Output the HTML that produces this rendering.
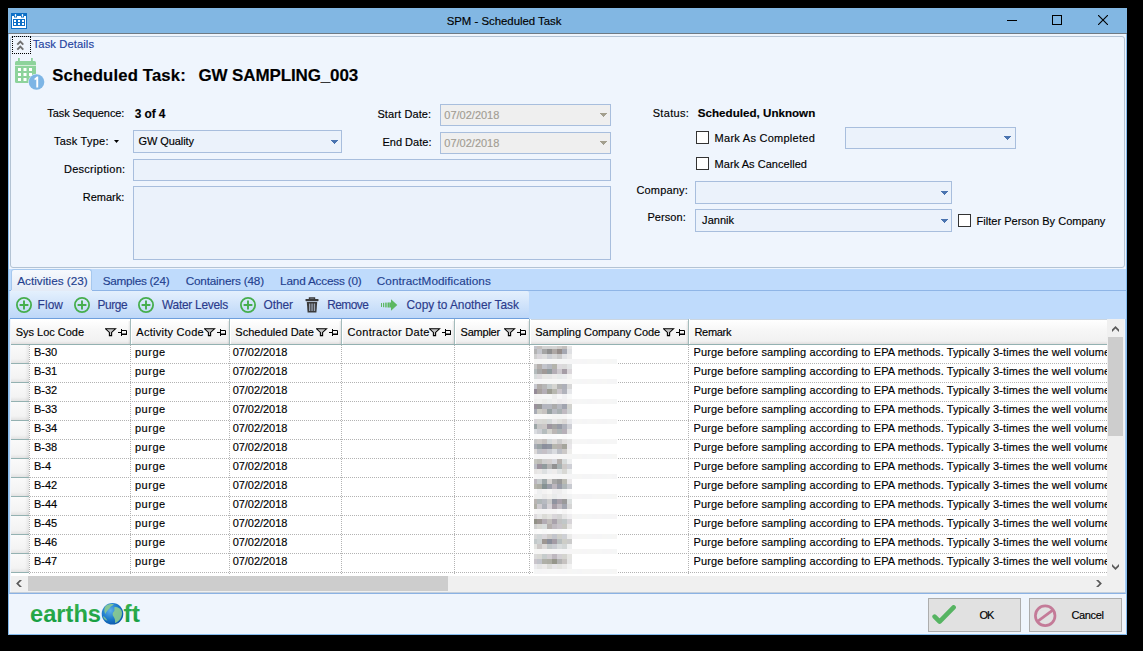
<!DOCTYPE html>
<html><head><meta charset="utf-8">
<style>
*{box-sizing:border-box}
html,body{margin:0;padding:0;width:1143px;height:651px;overflow:hidden;background:#000;font-family:"Liberation Sans",sans-serif;font-size:11px;color:#000}
.a{position:absolute}
.t{position:absolute;line-height:1;white-space:nowrap;-webkit-text-stroke:0.15px currentColor}
</style></head><body>
<div class="a" style="left:8px;top:8px;width:1119px;height:627px;background:#EFF5FD;border:1px solid #86BCEE"></div>
<div class="a" style="left:8px;top:8px;width:1119px;height:25px;background:#82B7E3"></div>
<div class="a" style="left:8px;top:33px;width:1119px;height:1px;background:#6F7A84"></div>
<svg class="a" style="left:11px;top:13px" width="16" height="16" viewBox="0 0 16 16">
<rect x="0" y="0" width="16" height="16" fill="#0D6FC6"/>
<rect x="1" y="3" width="14" height="12" fill="#fff"/>
<rect x="3" y="2" width="3" height="2.5" fill="#0D6FC6"/><rect x="10" y="2" width="3" height="2.5" fill="#0D6FC6"/>
<rect x="3.8" y="1" width="1.4" height="2.8" rx="0.7" fill="#fff"/><rect x="10.8" y="1" width="1.4" height="2.8" rx="0.7" fill="#fff"/>
<rect x="2" y="6" width="12" height="7" fill="#0D6FC6"/>
<rect x="3" y="7" width="2" height="2" fill="#fff"/><rect x="7" y="7" width="2" height="2" fill="#fff"/><rect x="11" y="7" width="2" height="2" fill="#fff"/>
<rect x="3" y="10" width="2" height="2" fill="#fff"/><rect x="7" y="10" width="2" height="2" fill="#fff"/><rect x="11" y="10" width="2" height="2" fill="#fff"/>
</svg>
<div id="title" class="t" style="left:446.70px;top:16.01px;font-size:11.4px;font-weight:400;color:#000;letter-spacing:-0.011px;">SPM - Scheduled Task</div>
<div class="a" style="left:1007px;top:20px;width:10px;height:1px;background:#000"></div>
<div class="a" style="left:1052px;top:15px;width:10px;height:10px;border:1px solid #000"></div>
<svg class="a" style="left:1098px;top:15px" width="10" height="10" viewBox="0 0 10 10"><path d="M0 0L10 10M10 0L0 10" stroke="#000" stroke-width="1.1"/></svg>
<div class="a" style="left:10px;top:36px;width:1115px;height:232px;border:1px solid #B3C3D4;border-radius:3px;background:#EFF5FD"></div>
<div class="a" style="left:12px;top:36px;width:19px;height:18px;border:1px dotted #000"></div>
<svg class="a" style="left:16px;top:40px" width="10" height="11" viewBox="0 0 10 11"><path d="M1.3 4.6L4.3 1.6L7.3 4.6M1.3 9.6L4.3 6.6L7.3 9.6" stroke="#6F6F6F" stroke-width="1.9" fill="none"/></svg>
<div id="td" class="t" style="left:32.70px;top:39.00px;font-size:11.2px;font-weight:400;color:#2443A0;letter-spacing:0.091px;">Task Details</div>
<svg class="a" style="left:14px;top:57px" width="32" height="34" viewBox="0 0 32 34">
<rect x="1" y="4" width="21" height="22" rx="1.5" fill="#8DD39B"/>
<rect x="4" y="1" width="1.8" height="5" fill="#8DD39B"/><rect x="17" y="1" width="1.8" height="5" fill="#8DD39B"/>
<rect x="1" y="8" width="21" height="0.8" fill="#E6F4E8"/>
<rect x="4" y="11" width="3" height="3" fill="#fff"/><rect x="9.5" y="11" width="3" height="3" fill="#fff"/><rect x="15" y="11" width="3" height="3" fill="#fff"/>
<rect x="4" y="16" width="3" height="3" fill="#fff"/><rect x="9.5" y="16" width="3" height="3" fill="#fff"/><rect x="15" y="16" width="3" height="3" fill="#fff"/>
<rect x="4" y="21" width="3" height="3" fill="#fff"/><rect x="9.5" y="21" width="3" height="3" fill="#fff"/>
<circle cx="22.5" cy="25" r="8.3" fill="#EFF5FD"/>
<circle cx="22.5" cy="25" r="7.8" fill="#7DB5E5"/>
<path d="M20.3 21.8L23 19.6H24.2V30.4H22.3V22.3L20.9 23.3Z" fill="#fff"/>
</svg>
<div id="h1" class="t" style="left:52.20px;top:68.00px;font-size:16.7px;font-weight:700;color:#000;letter-spacing:0.157px;">Scheduled Task:</div>
<div id="h2" class="t" style="left:198.50px;top:67.00px;font-size:17px;font-weight:700;color:#000;letter-spacing:-0.129px;">GW SAMPLING_003</div>
<div id="seq" class="t" style="left:47.30px;top:108.00px;font-size:11px;font-weight:400;color:#000;letter-spacing:-0.092px;">Task Sequence:</div>
<div id="seqv" class="t" style="left:134.70px;top:109.00px;font-size:11.9px;font-weight:700;color:#000;letter-spacing:-0.080px;">3 of 4</div>
<div id="ttype" class="t" style="left:53.90px;top:136.00px;font-size:11px;font-weight:400;color:#000;letter-spacing:0.244px;">Task Type:</div>
<svg class="a" style="left:114px;top:140px" width="5" height="3"><path d="M0 0H5L2.5 3Z" fill="#000"/></svg>
<div class="a" style="left:133px;top:130px;width:209px;height:23px;border:1px solid #A8BEDD;background:#EBF2FB"></div>
<div id="gwq" class="t" style="left:138.60px;top:136.00px;font-size:11px;font-weight:400;color:#000;letter-spacing:-0.089px;">GW Quality</div>
<svg class="a" style="left:331px;top:140px" width="7" height="4"><rect x="0" y="0" width="7" height="1" fill="#4A74B0"/><rect x="1" y="1" width="5" height="1" fill="#4A74B0"/><rect x="2" y="2" width="3" height="1" fill="#4A74B0"/><rect x="3" y="3" width="1" height="1" fill="#4A74B0"/></svg>
<div id="desc" class="t" style="left:63.90px;top:164.00px;font-size:11px;font-weight:400;color:#000;letter-spacing:0.291px;">Description:</div>
<div class="a" style="left:133px;top:159px;width:478px;height:22px;border:1px solid #A8BEDD;background:#EBF2FB"></div>
<div id="rem" class="t" style="left:82.70px;top:192.00px;font-size:11px;font-weight:400;color:#000;letter-spacing:0.000px;">Remark:</div>
<div class="a" style="left:133px;top:186px;width:478px;height:74px;border:1px solid #A8BEDD;background:#EBF2FB"></div>
<div id="sd" class="t" style="left:377.40px;top:109.00px;font-size:11px;font-weight:400;color:#000;letter-spacing:0.120px;">Start Date:</div>
<div class="a" style="left:440px;top:104px;width:171px;height:22px;border:1px solid #A8BEDD;background:#EFEFEF"></div>
<div id="sdv" class="t" style="left:444.30px;top:110.00px;font-size:11px;font-weight:400;color:#A29D93;letter-spacing:0.000px;">07/02/2018</div>
<svg class="a" style="left:600px;top:113px" width="7" height="4"><rect x="0" y="0" width="7" height="1" fill="#A39F8E"/><rect x="1" y="1" width="5" height="1" fill="#A39F8E"/><rect x="2" y="2" width="3" height="1" fill="#A39F8E"/><rect x="3" y="3" width="1" height="1" fill="#A39F8E"/></svg>
<div id="ed" class="t" style="left:382.40px;top:137.00px;font-size:11px;font-weight:400;color:#000;letter-spacing:0.025px;">End Date:</div>
<div class="a" style="left:440px;top:132px;width:171px;height:22px;border:1px solid #A8BEDD;background:#EFEFEF"></div>
<div id="edv" class="t" style="left:444.30px;top:138.00px;font-size:11px;font-weight:400;color:#A29D93;letter-spacing:0.000px;">07/02/2018</div>
<svg class="a" style="left:600px;top:141px" width="7" height="4"><rect x="0" y="0" width="7" height="1" fill="#A39F8E"/><rect x="1" y="1" width="5" height="1" fill="#A39F8E"/><rect x="2" y="2" width="3" height="1" fill="#A39F8E"/><rect x="3" y="3" width="1" height="1" fill="#A39F8E"/></svg>
<div id="st" class="t" style="left:652.70px;top:108.00px;font-size:11px;font-weight:400;color:#000;letter-spacing:0.333px;">Status:</div>
<div id="stv" class="t" style="left:697.80px;top:107.01px;font-size:11.6px;font-weight:700;color:#000;letter-spacing:0.012px;">Scheduled, Unknown</div>
<div class="a" style="left:696px;top:131px;width:13px;height:13px;border:1px solid #333;background:#fff"></div>
<div id="mac" class="t" style="left:714.60px;top:133.00px;font-size:11px;font-weight:400;color:#000;letter-spacing:0.262px;">Mark As Completed</div>
<div class="a" style="left:845px;top:127px;width:171px;height:22px;border:1px solid #A8BEDD;background:#EBF2FB"></div>
<svg class="a" style="left:1004px;top:136px" width="7" height="4"><rect x="0" y="0" width="7" height="1" fill="#4A74B0"/><rect x="1" y="1" width="5" height="1" fill="#4A74B0"/><rect x="2" y="2" width="3" height="1" fill="#4A74B0"/><rect x="3" y="3" width="1" height="1" fill="#4A74B0"/></svg>
<div class="a" style="left:696px;top:157px;width:13px;height:13px;border:1px solid #333;background:#fff"></div>
<div id="macc" class="t" style="left:714.60px;top:159.00px;font-size:11px;font-weight:400;color:#000;letter-spacing:0.038px;">Mark As Cancelled</div>
<div id="comp" class="t" style="left:636.40px;top:185.00px;font-size:11px;font-weight:400;color:#000;letter-spacing:0.171px;">Company:</div>
<div class="a" style="left:695px;top:181px;width:257px;height:23px;border:1px solid #A8BEDD;background:#EBF2FB"></div>
<svg class="a" style="left:941px;top:191px" width="7" height="4"><rect x="0" y="0" width="7" height="1" fill="#4A74B0"/><rect x="1" y="1" width="5" height="1" fill="#4A74B0"/><rect x="2" y="2" width="3" height="1" fill="#4A74B0"/><rect x="3" y="3" width="1" height="1" fill="#4A74B0"/></svg>
<div id="pers" class="t" style="left:647.40px;top:212.00px;font-size:11px;font-weight:400;color:#000;letter-spacing:0.067px;">Person:</div>
<div class="a" style="left:695px;top:209px;width:257px;height:23px;border:1px solid #A8BEDD;background:#EBF2FB"></div>
<div id="jan" class="t" style="left:702.10px;top:215.00px;font-size:11px;font-weight:400;color:#000;letter-spacing:0.040px;">Jannik</div>
<svg class="a" style="left:941px;top:219px" width="7" height="4"><rect x="0" y="0" width="7" height="1" fill="#4A74B0"/><rect x="1" y="1" width="5" height="1" fill="#4A74B0"/><rect x="2" y="2" width="3" height="1" fill="#4A74B0"/><rect x="3" y="3" width="1" height="1" fill="#4A74B0"/></svg>
<div class="a" style="left:958px;top:214px;width:13px;height:13px;border:1px solid #333;background:#fff"></div>
<div id="fpc" class="t" style="left:976.60px;top:216.00px;font-size:11px;font-weight:400;color:#000;letter-spacing:0.017px;">Filter Person By Company</div>
<div class="a" style="left:9px;top:269px;width:1117px;height:50px;background:#BFDBFC"></div>
<div class="a" style="left:9px;top:291px;width:1117px;height:303px;background:#EFF5FD;border:1px solid #A9CAEE;border-top:none;border-bottom-color:#8BB2E4"></div>
<div class="a" style="left:9px;top:291px;width:1117px;height:28px;background:#BFDBFC"></div>
<div class="a" style="left:11px;top:269px;width:81px;height:22px;background:linear-gradient(#F6F9FD,#E4EBF6);border:1px solid #A6C8EE;border-bottom:none;border-radius:3px 3px 0 0"></div>
<div id="tab1" class="t" style="left:17.20px;top:275.01px;font-size:11.75px;font-weight:400;color:#233F8F;letter-spacing:0.000px;">Activities (23)</div>
<div id="tab2" class="t" style="left:102.70px;top:275.01px;font-size:11.75px;font-weight:400;color:#233F8F;letter-spacing:-0.273px;">Samples (24)</div>
<div id="tab3" class="t" style="left:185.70px;top:275.01px;font-size:11.75px;font-weight:400;color:#233F8F;letter-spacing:-0.186px;">Containers (48)</div>
<div id="tab4" class="t" style="left:280.10px;top:275.01px;font-size:11.75px;font-weight:400;color:#233F8F;letter-spacing:-0.186px;">Land Access (0)</div>
<div id="tab5" class="t" style="left:376.80px;top:275.01px;font-size:11.75px;font-weight:400;color:#233F8F;letter-spacing:0.050px;">ContractModifications</div>
<div class="a" style="left:9px;top:290px;width:1117px;height:1px;background:#8FB5E6"></div>
<div class="a" style="left:11px;top:290px;width:81px;height:1px;background:#E4EBF6"></div>
<div class="a" style="left:10px;top:291px;width:519px;height:28px;background:linear-gradient(#E4F0FD,#BDD7F8);border-bottom:1px solid #6E9FDC;border-radius:0 2px 0 0"></div>
<svg class="a" style="left:16px;top:297px" width="16" height="16" viewBox="0 0 16 16"><circle cx="8" cy="8" r="7.1" fill="none" stroke="#46AE4D" stroke-width="1.8"/><path d="M3.6 8H12.4M8 3.6V12.4" stroke="#46AE4D" stroke-width="1.9"/></svg>
<svg class="a" style="left:74px;top:297px" width="16" height="16" viewBox="0 0 16 16"><circle cx="8" cy="8" r="7.1" fill="none" stroke="#46AE4D" stroke-width="1.8"/><path d="M3.6 8H12.4M8 3.6V12.4" stroke="#46AE4D" stroke-width="1.9"/></svg>
<svg class="a" style="left:138px;top:297px" width="16" height="16" viewBox="0 0 16 16"><circle cx="8" cy="8" r="7.1" fill="none" stroke="#46AE4D" stroke-width="1.8"/><path d="M3.6 8H12.4M8 3.6V12.4" stroke="#46AE4D" stroke-width="1.9"/></svg>
<svg class="a" style="left:240px;top:297px" width="16" height="16" viewBox="0 0 16 16"><circle cx="8" cy="8" r="7.1" fill="none" stroke="#46AE4D" stroke-width="1.8"/><path d="M3.6 8H12.4M8 3.6V12.4" stroke="#46AE4D" stroke-width="1.9"/></svg>
<svg class="a" style="left:305px;top:297px" width="14" height="16" viewBox="0 0 14 16"><path d="M4.5 2.2V1H9.5V2.2" stroke="#3A3A3A" stroke-width="1.4" fill="none"/><rect x="0.5" y="2" width="13" height="2.2" rx="0.6" fill="#3A3A3A"/><path d="M1.8 5H12.2L11.4 15.5H2.6Z" fill="#3A3A3A"/><rect x="4" y="6.5" width="1.3" height="7.5" fill="#9AA5B5"/><rect x="6.4" y="6.5" width="1.3" height="7.5" fill="#9AA5B5"/><rect x="8.8" y="6.5" width="1.3" height="7.5" fill="#9AA5B5"/></svg>
<svg class="a" style="left:381px;top:299px" width="17" height="12" viewBox="0 0 17 12"><rect x="0" y="4" width="1" height="4" fill="#5DB862"/><rect x="2" y="3.8" width="1.2" height="4.4" fill="#5DB862"/><rect x="4.2" y="3.6" width="1.5" height="4.8" fill="#5DB862"/><rect x="6.5" y="3.5" width="2" height="5" fill="#5DB862"/><path d="M8.5 3.5H10V0.3L16.3 6L10 11.7V8.5H8.5Z" fill="#5DB862"/></svg>
<div id="tb1" class="t" style="left:37.60px;top:300.00px;font-size:11.9px;font-weight:400;color:#2B3B8C;letter-spacing:0.067px;">Flow</div>
<div id="tb2" class="t" style="left:97.40px;top:300.00px;font-size:11.9px;font-weight:400;color:#2B3B8C;letter-spacing:-0.350px;">Purge</div>
<div id="tb3" class="t" style="left:162.00px;top:300.00px;font-size:11.9px;font-weight:400;color:#2B3B8C;letter-spacing:-0.255px;">Water Levels</div>
<div id="tb4" class="t" style="left:263.50px;top:300.00px;font-size:11.9px;font-weight:400;color:#2B3B8C;letter-spacing:-0.050px;">Other</div>
<div id="tb5" class="t" style="left:327.20px;top:300.00px;font-size:11.9px;font-weight:400;color:#2B3B8C;letter-spacing:-0.520px;">Remove</div>
<div id="tb6" class="t" style="left:406.50px;top:300.00px;font-size:11.9px;font-weight:400;color:#2B3B8C;letter-spacing:-0.021px;">Copy to Another Task</div>
<div class="a" style="left:11px;top:319px;width:1096px;height:257px;background:#fff"></div>
<div class="a" style="left:11px;top:320px;width:1096px;height:24px;background:linear-gradient(#FFFFFF,#F6F6F6 45%,#F1F1F1 88%,#E2DFDF)"></div>
<div class="a" style="left:11px;top:344px;width:1096px;height:1px;background:#93B1B1"></div>
<div class="a" style="left:529px;top:319px;width:578px;height:1px;background:#CCD6E0"></div>
<div class="a" style="left:130px;top:319px;width:1px;height:25px;background:#A3BBBB"></div>
<div class="a" style="left:131px;top:319px;width:1px;height:25px;background:#FFFFFF"></div>
<div class="a" style="left:128px;top:321px;width:2px;height:23px;background:linear-gradient(90deg,rgba(0,0,0,0),rgba(0,0,0,0.09))"></div>
<div class="a" style="left:229px;top:319px;width:1px;height:25px;background:#A3BBBB"></div>
<div class="a" style="left:230px;top:319px;width:1px;height:25px;background:#FFFFFF"></div>
<div class="a" style="left:227px;top:321px;width:2px;height:23px;background:linear-gradient(90deg,rgba(0,0,0,0),rgba(0,0,0,0.09))"></div>
<div class="a" style="left:341px;top:319px;width:1px;height:25px;background:#A3BBBB"></div>
<div class="a" style="left:342px;top:319px;width:1px;height:25px;background:#FFFFFF"></div>
<div class="a" style="left:339px;top:321px;width:2px;height:23px;background:linear-gradient(90deg,rgba(0,0,0,0),rgba(0,0,0,0.09))"></div>
<div class="a" style="left:454px;top:319px;width:1px;height:25px;background:#A3BBBB"></div>
<div class="a" style="left:455px;top:319px;width:1px;height:25px;background:#FFFFFF"></div>
<div class="a" style="left:452px;top:321px;width:2px;height:23px;background:linear-gradient(90deg,rgba(0,0,0,0),rgba(0,0,0,0.09))"></div>
<div class="a" style="left:529px;top:319px;width:1px;height:25px;background:#A3BBBB"></div>
<div class="a" style="left:530px;top:319px;width:1px;height:25px;background:#FFFFFF"></div>
<div class="a" style="left:527px;top:321px;width:2px;height:23px;background:linear-gradient(90deg,rgba(0,0,0,0),rgba(0,0,0,0.09))"></div>
<div class="a" style="left:688px;top:319px;width:1px;height:25px;background:#A3BBBB"></div>
<div class="a" style="left:689px;top:319px;width:1px;height:25px;background:#FFFFFF"></div>
<div class="a" style="left:686px;top:321px;width:2px;height:23px;background:linear-gradient(90deg,rgba(0,0,0,0),rgba(0,0,0,0.09))"></div>
<div id="hd0" class="t" style="left:15.80px;top:327.00px;font-size:11px;font-weight:400;color:#000;letter-spacing:-0.018px;">Sys Loc Code</div>
<div id="hd1" class="t" style="left:136.30px;top:327.00px;font-size:11px;font-weight:400;color:#000;letter-spacing:0.270px;">Activity Code</div>
<div id="hd2" class="t" style="left:235.30px;top:327.00px;font-size:11px;font-weight:400;color:#000;letter-spacing:0.031px;">Scheduled Date</div>
<div id="hd3" class="t" style="left:347.60px;top:327.00px;font-size:11px;font-weight:400;color:#000;letter-spacing:0.300px;">Contractor Date</div>
<div id="hd4" class="t" style="left:460.60px;top:327.00px;font-size:11px;font-weight:400;color:#000;letter-spacing:-0.233px;">Sampler</div>
<div id="hd5" class="t" style="left:535.30px;top:327.00px;font-size:11px;font-weight:400;color:#000;letter-spacing:-0.020px;">Sampling Company Code</div>
<div id="hd6" class="t" style="left:694.40px;top:327.00px;font-size:11px;font-weight:400;color:#000;letter-spacing:-0.280px;">Remark</div>
<svg class="a" style="left:105px;top:328px" width="23" height="9" viewBox="0 0 23 9"><path d="M0.5 0.8H10.5L6.6 4.4V7.6H4.4V4.4Z" fill="#C8C8C8" stroke="#000" stroke-width="1.1"/><path d="M13 4.5H16M16.5 1V8M16.5 2.5H21.5V6.5H16.5" stroke="#000" stroke-width="1" fill="none"/><rect x="16.5" y="5.5" width="5.5" height="1.5" fill="#000"/></svg>
<svg class="a" style="left:204px;top:328px" width="23" height="9" viewBox="0 0 23 9"><path d="M0.5 0.8H10.5L6.6 4.4V7.6H4.4V4.4Z" fill="#C8C8C8" stroke="#000" stroke-width="1.1"/><path d="M13 4.5H16M16.5 1V8M16.5 2.5H21.5V6.5H16.5" stroke="#000" stroke-width="1" fill="none"/><rect x="16.5" y="5.5" width="5.5" height="1.5" fill="#000"/></svg>
<svg class="a" style="left:316px;top:328px" width="23" height="9" viewBox="0 0 23 9"><path d="M0.5 0.8H10.5L6.6 4.4V7.6H4.4V4.4Z" fill="#C8C8C8" stroke="#000" stroke-width="1.1"/><path d="M13 4.5H16M16.5 1V8M16.5 2.5H21.5V6.5H16.5" stroke="#000" stroke-width="1" fill="none"/><rect x="16.5" y="5.5" width="5.5" height="1.5" fill="#000"/></svg>
<svg class="a" style="left:429px;top:328px" width="23" height="9" viewBox="0 0 23 9"><path d="M0.5 0.8H10.5L6.6 4.4V7.6H4.4V4.4Z" fill="#C8C8C8" stroke="#000" stroke-width="1.1"/><path d="M13 4.5H16M16.5 1V8M16.5 2.5H21.5V6.5H16.5" stroke="#000" stroke-width="1" fill="none"/><rect x="16.5" y="5.5" width="5.5" height="1.5" fill="#000"/></svg>
<svg class="a" style="left:504px;top:328px" width="23" height="9" viewBox="0 0 23 9"><path d="M0.5 0.8H10.5L6.6 4.4V7.6H4.4V4.4Z" fill="#C8C8C8" stroke="#000" stroke-width="1.1"/><path d="M13 4.5H16M16.5 1V8M16.5 2.5H21.5V6.5H16.5" stroke="#000" stroke-width="1" fill="none"/><rect x="16.5" y="5.5" width="5.5" height="1.5" fill="#000"/></svg>
<svg class="a" style="left:663px;top:328px" width="23" height="9" viewBox="0 0 23 9"><path d="M0.5 0.8H10.5L6.6 4.4V7.6H4.4V4.4Z" fill="#C8C8C8" stroke="#000" stroke-width="1.1"/><path d="M13 4.5H16M16.5 1V8M16.5 2.5H21.5V6.5H16.5" stroke="#000" stroke-width="1" fill="none"/><rect x="16.5" y="5.5" width="5.5" height="1.5" fill="#000"/></svg>
<div class="a" style="left:11px;top:345px;width:18px;height:18px;background:linear-gradient(90deg,rgba(0,0,0,0) 78%,rgba(0,0,0,0.07)),linear-gradient(#FAFAFA,#F3F3F3 78%,#E2E2E2)"></div>
<div class="a" style="left:11px;top:363px;width:18px;height:1px;background:#93B1B1"></div>
<div class="a" style="left:29px;top:363px;width:1078px;height:1px;background:repeating-linear-gradient(90deg,transparent 0 1px,#B3B3B3 1px 2px)"></div>
<div id="r0a" class="t" style="left:34.10px;top:347.00px;font-size:11px;font-weight:400;color:#000;letter-spacing:-0.067px;">B-30</div>
<div id="r0b" class="t" style="left:134.90px;top:347.00px;font-size:11px;font-weight:400;color:#000;letter-spacing:0.550px;">purge</div>
<div id="r0c" class="t" style="left:232.70px;top:347.00px;font-size:11px;font-weight:400;color:#000;letter-spacing:-0.044px;">07/02/2018</div>
<div id="r0d" class="t" style="left:693.50px;top:347.00px;font-size:11px;font-weight:400;color:#000;letter-spacing:0.000px;width:413.5px;overflow:hidden;letter-spacing:0.1px">Purge before sampling according to EPA methods. Typically 3-times the well volume</div>
<div class="a" style="left:11px;top:364px;width:18px;height:18px;background:linear-gradient(90deg,rgba(0,0,0,0) 78%,rgba(0,0,0,0.07)),linear-gradient(#FAFAFA,#F3F3F3 78%,#E2E2E2)"></div>
<div class="a" style="left:11px;top:382px;width:18px;height:1px;background:#93B1B1"></div>
<div class="a" style="left:29px;top:382px;width:1078px;height:1px;background:repeating-linear-gradient(90deg,transparent 0 1px,#B3B3B3 1px 2px)"></div>
<div id="r1a" class="t" style="left:34.10px;top:366.00px;font-size:11px;font-weight:400;color:#000;letter-spacing:-0.067px;">B-31</div>
<div id="r1b" class="t" style="left:134.90px;top:366.00px;font-size:11px;font-weight:400;color:#000;letter-spacing:0.550px;">purge</div>
<div id="r1c" class="t" style="left:232.70px;top:366.00px;font-size:11px;font-weight:400;color:#000;letter-spacing:-0.044px;">07/02/2018</div>
<div id="r1d" class="t" style="left:693.50px;top:366.00px;font-size:11px;font-weight:400;color:#000;letter-spacing:0.000px;width:413.5px;overflow:hidden;letter-spacing:0.1px">Purge before sampling according to EPA methods. Typically 3-times the well volume</div>
<div class="a" style="left:11px;top:383px;width:18px;height:18px;background:linear-gradient(90deg,rgba(0,0,0,0) 78%,rgba(0,0,0,0.07)),linear-gradient(#FAFAFA,#F3F3F3 78%,#E2E2E2)"></div>
<div class="a" style="left:11px;top:401px;width:18px;height:1px;background:#93B1B1"></div>
<div class="a" style="left:29px;top:401px;width:1078px;height:1px;background:repeating-linear-gradient(90deg,transparent 0 1px,#B3B3B3 1px 2px)"></div>
<div id="r2a" class="t" style="left:34.10px;top:385.00px;font-size:11px;font-weight:400;color:#000;letter-spacing:-0.067px;">B-32</div>
<div id="r2b" class="t" style="left:134.90px;top:385.00px;font-size:11px;font-weight:400;color:#000;letter-spacing:0.550px;">purge</div>
<div id="r2c" class="t" style="left:232.70px;top:385.00px;font-size:11px;font-weight:400;color:#000;letter-spacing:-0.044px;">07/02/2018</div>
<div id="r2d" class="t" style="left:693.50px;top:385.00px;font-size:11px;font-weight:400;color:#000;letter-spacing:0.000px;width:413.5px;overflow:hidden;letter-spacing:0.1px">Purge before sampling according to EPA methods. Typically 3-times the well volume</div>
<div class="a" style="left:11px;top:402px;width:18px;height:18px;background:linear-gradient(90deg,rgba(0,0,0,0) 78%,rgba(0,0,0,0.07)),linear-gradient(#FAFAFA,#F3F3F3 78%,#E2E2E2)"></div>
<div class="a" style="left:11px;top:420px;width:18px;height:1px;background:#93B1B1"></div>
<div class="a" style="left:29px;top:420px;width:1078px;height:1px;background:repeating-linear-gradient(90deg,transparent 0 1px,#B3B3B3 1px 2px)"></div>
<div id="r3a" class="t" style="left:34.10px;top:404.00px;font-size:11px;font-weight:400;color:#000;letter-spacing:-0.067px;">B-33</div>
<div id="r3b" class="t" style="left:134.90px;top:404.00px;font-size:11px;font-weight:400;color:#000;letter-spacing:0.550px;">purge</div>
<div id="r3c" class="t" style="left:232.70px;top:404.00px;font-size:11px;font-weight:400;color:#000;letter-spacing:-0.044px;">07/02/2018</div>
<div id="r3d" class="t" style="left:693.50px;top:404.00px;font-size:11px;font-weight:400;color:#000;letter-spacing:0.000px;width:413.5px;overflow:hidden;letter-spacing:0.1px">Purge before sampling according to EPA methods. Typically 3-times the well volume</div>
<div class="a" style="left:11px;top:421px;width:18px;height:18px;background:linear-gradient(90deg,rgba(0,0,0,0) 78%,rgba(0,0,0,0.07)),linear-gradient(#FAFAFA,#F3F3F3 78%,#E2E2E2)"></div>
<div class="a" style="left:11px;top:439px;width:18px;height:1px;background:#93B1B1"></div>
<div class="a" style="left:29px;top:439px;width:1078px;height:1px;background:repeating-linear-gradient(90deg,transparent 0 1px,#B3B3B3 1px 2px)"></div>
<div id="r4a" class="t" style="left:34.10px;top:423.00px;font-size:11px;font-weight:400;color:#000;letter-spacing:-0.067px;">B-34</div>
<div id="r4b" class="t" style="left:134.90px;top:423.00px;font-size:11px;font-weight:400;color:#000;letter-spacing:0.550px;">purge</div>
<div id="r4c" class="t" style="left:232.70px;top:423.00px;font-size:11px;font-weight:400;color:#000;letter-spacing:-0.044px;">07/02/2018</div>
<div id="r4d" class="t" style="left:693.50px;top:423.00px;font-size:11px;font-weight:400;color:#000;letter-spacing:0.000px;width:413.5px;overflow:hidden;letter-spacing:0.1px">Purge before sampling according to EPA methods. Typically 3-times the well volume</div>
<div class="a" style="left:11px;top:440px;width:18px;height:18px;background:linear-gradient(90deg,rgba(0,0,0,0) 78%,rgba(0,0,0,0.07)),linear-gradient(#FAFAFA,#F3F3F3 78%,#E2E2E2)"></div>
<div class="a" style="left:11px;top:458px;width:18px;height:1px;background:#93B1B1"></div>
<div class="a" style="left:29px;top:458px;width:1078px;height:1px;background:repeating-linear-gradient(90deg,transparent 0 1px,#B3B3B3 1px 2px)"></div>
<div id="r5a" class="t" style="left:34.10px;top:442.00px;font-size:11px;font-weight:400;color:#000;letter-spacing:-0.067px;">B-38</div>
<div id="r5b" class="t" style="left:134.90px;top:442.00px;font-size:11px;font-weight:400;color:#000;letter-spacing:0.550px;">purge</div>
<div id="r5c" class="t" style="left:232.70px;top:442.00px;font-size:11px;font-weight:400;color:#000;letter-spacing:-0.044px;">07/02/2018</div>
<div id="r5d" class="t" style="left:693.50px;top:442.00px;font-size:11px;font-weight:400;color:#000;letter-spacing:0.000px;width:413.5px;overflow:hidden;letter-spacing:0.1px">Purge before sampling according to EPA methods. Typically 3-times the well volume</div>
<div class="a" style="left:11px;top:459px;width:18px;height:18px;background:linear-gradient(90deg,rgba(0,0,0,0) 78%,rgba(0,0,0,0.07)),linear-gradient(#FAFAFA,#F3F3F3 78%,#E2E2E2)"></div>
<div class="a" style="left:11px;top:477px;width:18px;height:1px;background:#93B1B1"></div>
<div class="a" style="left:29px;top:477px;width:1078px;height:1px;background:repeating-linear-gradient(90deg,transparent 0 1px,#B3B3B3 1px 2px)"></div>
<div id="r6a" class="t" style="left:34.10px;top:461.00px;font-size:11px;font-weight:400;color:#000;letter-spacing:-0.067px;">B-4</div>
<div id="r6b" class="t" style="left:134.90px;top:461.00px;font-size:11px;font-weight:400;color:#000;letter-spacing:0.550px;">purge</div>
<div id="r6c" class="t" style="left:232.70px;top:461.00px;font-size:11px;font-weight:400;color:#000;letter-spacing:-0.044px;">07/02/2018</div>
<div id="r6d" class="t" style="left:693.50px;top:461.00px;font-size:11px;font-weight:400;color:#000;letter-spacing:0.000px;width:413.5px;overflow:hidden;letter-spacing:0.1px">Purge before sampling according to EPA methods. Typically 3-times the well volume</div>
<div class="a" style="left:11px;top:478px;width:18px;height:18px;background:linear-gradient(90deg,rgba(0,0,0,0) 78%,rgba(0,0,0,0.07)),linear-gradient(#FAFAFA,#F3F3F3 78%,#E2E2E2)"></div>
<div class="a" style="left:11px;top:496px;width:18px;height:1px;background:#93B1B1"></div>
<div class="a" style="left:29px;top:496px;width:1078px;height:1px;background:repeating-linear-gradient(90deg,transparent 0 1px,#B3B3B3 1px 2px)"></div>
<div id="r7a" class="t" style="left:34.10px;top:480.00px;font-size:11px;font-weight:400;color:#000;letter-spacing:-0.067px;">B-42</div>
<div id="r7b" class="t" style="left:134.90px;top:480.00px;font-size:11px;font-weight:400;color:#000;letter-spacing:0.550px;">purge</div>
<div id="r7c" class="t" style="left:232.70px;top:480.00px;font-size:11px;font-weight:400;color:#000;letter-spacing:-0.044px;">07/02/2018</div>
<div id="r7d" class="t" style="left:693.50px;top:480.00px;font-size:11px;font-weight:400;color:#000;letter-spacing:0.000px;width:413.5px;overflow:hidden;letter-spacing:0.1px">Purge before sampling according to EPA methods. Typically 3-times the well volume</div>
<div class="a" style="left:11px;top:497px;width:18px;height:18px;background:linear-gradient(90deg,rgba(0,0,0,0) 78%,rgba(0,0,0,0.07)),linear-gradient(#FAFAFA,#F3F3F3 78%,#E2E2E2)"></div>
<div class="a" style="left:11px;top:515px;width:18px;height:1px;background:#93B1B1"></div>
<div class="a" style="left:29px;top:515px;width:1078px;height:1px;background:repeating-linear-gradient(90deg,transparent 0 1px,#B3B3B3 1px 2px)"></div>
<div id="r8a" class="t" style="left:34.10px;top:499.00px;font-size:11px;font-weight:400;color:#000;letter-spacing:-0.067px;">B-44</div>
<div id="r8b" class="t" style="left:134.90px;top:499.00px;font-size:11px;font-weight:400;color:#000;letter-spacing:0.550px;">purge</div>
<div id="r8c" class="t" style="left:232.70px;top:499.00px;font-size:11px;font-weight:400;color:#000;letter-spacing:-0.044px;">07/02/2018</div>
<div id="r8d" class="t" style="left:693.50px;top:499.00px;font-size:11px;font-weight:400;color:#000;letter-spacing:0.000px;width:413.5px;overflow:hidden;letter-spacing:0.1px">Purge before sampling according to EPA methods. Typically 3-times the well volume</div>
<div class="a" style="left:11px;top:516px;width:18px;height:18px;background:linear-gradient(90deg,rgba(0,0,0,0) 78%,rgba(0,0,0,0.07)),linear-gradient(#FAFAFA,#F3F3F3 78%,#E2E2E2)"></div>
<div class="a" style="left:11px;top:534px;width:18px;height:1px;background:#93B1B1"></div>
<div class="a" style="left:29px;top:534px;width:1078px;height:1px;background:repeating-linear-gradient(90deg,transparent 0 1px,#B3B3B3 1px 2px)"></div>
<div id="r9a" class="t" style="left:34.10px;top:518.00px;font-size:11px;font-weight:400;color:#000;letter-spacing:-0.067px;">B-45</div>
<div id="r9b" class="t" style="left:134.90px;top:518.00px;font-size:11px;font-weight:400;color:#000;letter-spacing:0.550px;">purge</div>
<div id="r9c" class="t" style="left:232.70px;top:518.00px;font-size:11px;font-weight:400;color:#000;letter-spacing:-0.044px;">07/02/2018</div>
<div id="r9d" class="t" style="left:693.50px;top:518.00px;font-size:11px;font-weight:400;color:#000;letter-spacing:0.000px;width:413.5px;overflow:hidden;letter-spacing:0.1px">Purge before sampling according to EPA methods. Typically 3-times the well volume</div>
<div class="a" style="left:11px;top:535px;width:18px;height:18px;background:linear-gradient(90deg,rgba(0,0,0,0) 78%,rgba(0,0,0,0.07)),linear-gradient(#FAFAFA,#F3F3F3 78%,#E2E2E2)"></div>
<div class="a" style="left:11px;top:553px;width:18px;height:1px;background:#93B1B1"></div>
<div class="a" style="left:29px;top:553px;width:1078px;height:1px;background:repeating-linear-gradient(90deg,transparent 0 1px,#B3B3B3 1px 2px)"></div>
<div id="r10a" class="t" style="left:34.10px;top:537.00px;font-size:11px;font-weight:400;color:#000;letter-spacing:-0.067px;">B-46</div>
<div id="r10b" class="t" style="left:134.90px;top:537.00px;font-size:11px;font-weight:400;color:#000;letter-spacing:0.550px;">purge</div>
<div id="r10c" class="t" style="left:232.70px;top:537.00px;font-size:11px;font-weight:400;color:#000;letter-spacing:-0.044px;">07/02/2018</div>
<div id="r10d" class="t" style="left:693.50px;top:537.00px;font-size:11px;font-weight:400;color:#000;letter-spacing:0.000px;width:413.5px;overflow:hidden;letter-spacing:0.1px">Purge before sampling according to EPA methods. Typically 3-times the well volume</div>
<div class="a" style="left:11px;top:554px;width:18px;height:18px;background:linear-gradient(90deg,rgba(0,0,0,0) 78%,rgba(0,0,0,0.07)),linear-gradient(#FAFAFA,#F3F3F3 78%,#E2E2E2)"></div>
<div class="a" style="left:11px;top:572px;width:18px;height:1px;background:#93B1B1"></div>
<div class="a" style="left:29px;top:572px;width:1078px;height:1px;background:repeating-linear-gradient(90deg,transparent 0 1px,#B3B3B3 1px 2px)"></div>
<div id="r11a" class="t" style="left:34.10px;top:556.00px;font-size:11px;font-weight:400;color:#000;letter-spacing:-0.067px;">B-47</div>
<div id="r11b" class="t" style="left:134.90px;top:556.00px;font-size:11px;font-weight:400;color:#000;letter-spacing:0.550px;">purge</div>
<div id="r11c" class="t" style="left:232.70px;top:556.00px;font-size:11px;font-weight:400;color:#000;letter-spacing:-0.044px;">07/02/2018</div>
<div id="r11d" class="t" style="left:693.50px;top:556.00px;font-size:11px;font-weight:400;color:#000;letter-spacing:0.000px;width:413.5px;overflow:hidden;letter-spacing:0.1px">Purge before sampling according to EPA methods. Typically 3-times the well volume</div>
<div class="a" style="left:29px;top:345px;width:1px;height:230px;background:repeating-linear-gradient(#B3B3B3 0 1px,transparent 1px 2px)"></div>
<div class="a" style="left:130px;top:345px;width:1px;height:230px;background:repeating-linear-gradient(#B3B3B3 0 1px,transparent 1px 2px)"></div>
<div class="a" style="left:229px;top:345px;width:1px;height:230px;background:repeating-linear-gradient(#B3B3B3 0 1px,transparent 1px 2px)"></div>
<div class="a" style="left:341px;top:345px;width:1px;height:230px;background:repeating-linear-gradient(#B3B3B3 0 1px,transparent 1px 2px)"></div>
<div class="a" style="left:454px;top:345px;width:1px;height:230px;background:repeating-linear-gradient(#B3B3B3 0 1px,transparent 1px 2px)"></div>
<div class="a" style="left:529px;top:345px;width:1px;height:230px;background:repeating-linear-gradient(#B3B3B3 0 1px,transparent 1px 2px)"></div>
<div class="a" style="left:688px;top:345px;width:1px;height:230px;background:repeating-linear-gradient(#B3B3B3 0 1px,transparent 1px 2px)"></div>
<div class="a" style="left:534px;top:346px;width:3px;height:3px;background:rgb(194,196,203)"></div>
<div class="a" style="left:537px;top:346px;width:5px;height:3px;background:rgb(197,193,191)"></div>
<div class="a" style="left:542px;top:346px;width:5px;height:3px;background:rgb(211,211,211)"></div>
<div class="a" style="left:547px;top:346px;width:5px;height:3px;background:rgb(210,210,210)"></div>
<div class="a" style="left:552px;top:346px;width:5px;height:3px;background:rgb(212,212,212)"></div>
<div class="a" style="left:557px;top:346px;width:5px;height:3px;background:rgb(206,203,201)"></div>
<div class="a" style="left:562px;top:346px;width:5px;height:3px;background:rgb(195,191,189)"></div>
<div class="a" style="left:567px;top:346px;width:5px;height:3px;background:rgb(231,231,231)"></div>
<div class="a" style="left:534px;top:349px;width:3px;height:5px;background:rgb(179,179,179)"></div>
<div class="a" style="left:537px;top:349px;width:5px;height:5px;background:rgb(196,198,204)"></div>
<div class="a" style="left:542px;top:349px;width:5px;height:5px;background:rgb(165,165,165)"></div>
<div class="a" style="left:547px;top:349px;width:5px;height:5px;background:rgb(143,143,143)"></div>
<div class="a" style="left:552px;top:349px;width:5px;height:5px;background:rgb(174,168,165)"></div>
<div class="a" style="left:557px;top:349px;width:5px;height:5px;background:rgb(149,141,138)"></div>
<div class="a" style="left:562px;top:349px;width:5px;height:5px;background:rgb(165,168,178)"></div>
<div class="a" style="left:567px;top:349px;width:5px;height:5px;background:rgb(223,224,227)"></div>
<div class="a" style="left:534px;top:354px;width:3px;height:5px;background:rgb(208,208,208)"></div>
<div class="a" style="left:537px;top:354px;width:5px;height:5px;background:rgb(219,216,220)"></div>
<div class="a" style="left:542px;top:354px;width:5px;height:5px;background:rgb(222,222,222)"></div>
<div class="a" style="left:547px;top:354px;width:5px;height:5px;background:rgb(205,207,212)"></div>
<div class="a" style="left:552px;top:354px;width:5px;height:5px;background:rgb(215,215,215)"></div>
<div class="a" style="left:557px;top:354px;width:5px;height:5px;background:rgb(202,202,202)"></div>
<div class="a" style="left:562px;top:354px;width:5px;height:5px;background:rgb(225,226,229)"></div>
<div class="a" style="left:567px;top:354px;width:5px;height:5px;background:rgb(235,235,235)"></div>
<div class="a" style="left:534px;top:359px;width:3px;height:5px;background:rgb(246,246,245)"></div>
<div class="a" style="left:537px;top:359px;width:5px;height:5px;background:rgb(245,246,246)"></div>
<div class="a" style="left:542px;top:359px;width:5px;height:5px;background:rgb(246,246,245)"></div>
<div class="a" style="left:547px;top:359px;width:5px;height:5px;background:rgb(246,246,246)"></div>
<div class="a" style="left:552px;top:359px;width:5px;height:5px;background:rgb(246,246,245)"></div>
<div class="a" style="left:557px;top:359px;width:5px;height:5px;background:rgb(245,246,246)"></div>
<div class="a" style="left:562px;top:359px;width:5px;height:5px;background:rgb(245,246,246)"></div>
<div class="a" style="left:567px;top:359px;width:5px;height:5px;background:rgb(245,245,246)"></div>
<div class="a" style="left:572px;top:359px;width:5px;height:5px;background:rgb(245,245,246)"></div>
<div class="a" style="left:577px;top:359px;width:5px;height:5px;background:rgb(246,245,246)"></div>
<div class="a" style="left:582px;top:359px;width:5px;height:5px;background:rgb(245,245,246)"></div>
<div class="a" style="left:587px;top:359px;width:5px;height:5px;background:rgb(246,246,245)"></div>
<div class="a" style="left:592px;top:359px;width:5px;height:5px;background:rgb(246,246,246)"></div>
<div class="a" style="left:597px;top:359px;width:5px;height:5px;background:rgb(245,246,246)"></div>
<div class="a" style="left:602px;top:359px;width:5px;height:5px;background:rgb(246,246,246)"></div>
<div class="a" style="left:607px;top:359px;width:5px;height:5px;background:rgb(246,246,245)"></div>
<div class="a" style="left:612px;top:359px;width:5px;height:5px;background:rgb(245,246,246)"></div>
<div class="a" style="left:617px;top:359px;width:0px;height:5px;background:rgb(246,245,246)"></div>
<div class="a" style="left:534px;top:364px;width:3px;height:5px;background:rgb(200,200,200)"></div>
<div class="a" style="left:537px;top:364px;width:5px;height:5px;background:rgb(180,175,172)"></div>
<div class="a" style="left:542px;top:364px;width:5px;height:5px;background:rgb(194,196,203)"></div>
<div class="a" style="left:547px;top:364px;width:5px;height:5px;background:rgb(182,185,193)"></div>
<div class="a" style="left:552px;top:364px;width:5px;height:5px;background:rgb(180,180,172)"></div>
<div class="a" style="left:557px;top:364px;width:5px;height:5px;background:rgb(221,218,222)"></div>
<div class="a" style="left:562px;top:364px;width:5px;height:5px;background:rgb(218,218,218)"></div>
<div class="a" style="left:567px;top:364px;width:5px;height:5px;background:rgb(226,228,229)"></div>
<div class="a" style="left:534px;top:369px;width:3px;height:5px;background:rgb(180,187,188)"></div>
<div class="a" style="left:537px;top:369px;width:5px;height:5px;background:rgb(167,167,167)"></div>
<div class="a" style="left:542px;top:369px;width:5px;height:5px;background:rgb(160,153,150)"></div>
<div class="a" style="left:547px;top:369px;width:5px;height:5px;background:rgb(144,154,156)"></div>
<div class="a" style="left:552px;top:369px;width:5px;height:5px;background:rgb(179,173,181)"></div>
<div class="a" style="left:557px;top:369px;width:5px;height:5px;background:rgb(205,201,206)"></div>
<div class="a" style="left:562px;top:369px;width:5px;height:5px;background:rgb(165,157,166)"></div>
<div class="a" style="left:567px;top:369px;width:5px;height:5px;background:rgb(218,214,218)"></div>
<div class="a" style="left:534px;top:374px;width:3px;height:5px;background:rgb(216,220,220)"></div>
<div class="a" style="left:537px;top:374px;width:5px;height:5px;background:rgb(223,220,223)"></div>
<div class="a" style="left:542px;top:374px;width:5px;height:5px;background:rgb(231,231,228)"></div>
<div class="a" style="left:547px;top:374px;width:5px;height:5px;background:rgb(230,230,230)"></div>
<div class="a" style="left:552px;top:374px;width:5px;height:5px;background:rgb(236,235,235)"></div>
<div class="a" style="left:557px;top:374px;width:5px;height:5px;background:rgb(231,234,234)"></div>
<div class="a" style="left:562px;top:374px;width:5px;height:5px;background:rgb(234,235,237)"></div>
<div class="a" style="left:567px;top:374px;width:5px;height:5px;background:rgb(243,243,242)"></div>
<div class="a" style="left:534px;top:379px;width:3px;height:5px;background:rgb(246,246,245)"></div>
<div class="a" style="left:537px;top:379px;width:5px;height:5px;background:rgb(245,245,246)"></div>
<div class="a" style="left:542px;top:379px;width:5px;height:5px;background:rgb(246,246,245)"></div>
<div class="a" style="left:547px;top:379px;width:5px;height:5px;background:rgb(246,246,245)"></div>
<div class="a" style="left:552px;top:379px;width:5px;height:5px;background:rgb(246,246,246)"></div>
<div class="a" style="left:557px;top:379px;width:5px;height:5px;background:rgb(245,246,246)"></div>
<div class="a" style="left:562px;top:379px;width:5px;height:5px;background:rgb(245,245,246)"></div>
<div class="a" style="left:567px;top:379px;width:5px;height:5px;background:rgb(246,246,245)"></div>
<div class="a" style="left:572px;top:379px;width:5px;height:5px;background:rgb(246,246,246)"></div>
<div class="a" style="left:577px;top:379px;width:5px;height:5px;background:rgb(245,246,246)"></div>
<div class="a" style="left:582px;top:379px;width:5px;height:5px;background:rgb(246,245,246)"></div>
<div class="a" style="left:587px;top:379px;width:5px;height:5px;background:rgb(246,246,245)"></div>
<div class="a" style="left:592px;top:379px;width:5px;height:5px;background:rgb(245,246,246)"></div>
<div class="a" style="left:597px;top:379px;width:5px;height:5px;background:rgb(246,245,246)"></div>
<div class="a" style="left:602px;top:379px;width:5px;height:5px;background:rgb(246,246,245)"></div>
<div class="a" style="left:607px;top:379px;width:5px;height:5px;background:rgb(245,245,246)"></div>
<div class="a" style="left:612px;top:379px;width:5px;height:5px;background:rgb(245,245,246)"></div>
<div class="a" style="left:617px;top:379px;width:0px;height:5px;background:rgb(246,246,245)"></div>
<div class="a" style="left:534px;top:384px;width:3px;height:5px;background:rgb(199,200,207)"></div>
<div class="a" style="left:537px;top:384px;width:5px;height:5px;background:rgb(177,172,169)"></div>
<div class="a" style="left:542px;top:384px;width:5px;height:5px;background:rgb(183,183,183)"></div>
<div class="a" style="left:547px;top:384px;width:5px;height:5px;background:rgb(197,203,204)"></div>
<div class="a" style="left:552px;top:384px;width:5px;height:5px;background:rgb(213,213,209)"></div>
<div class="a" style="left:557px;top:384px;width:5px;height:5px;background:rgb(179,179,179)"></div>
<div class="a" style="left:562px;top:384px;width:5px;height:5px;background:rgb(174,176,185)"></div>
<div class="a" style="left:567px;top:384px;width:5px;height:5px;background:rgb(216,216,216)"></div>
<div class="a" style="left:534px;top:389px;width:3px;height:5px;background:rgb(149,139,151)"></div>
<div class="a" style="left:537px;top:389px;width:5px;height:5px;background:rgb(168,162,159)"></div>
<div class="a" style="left:542px;top:389px;width:5px;height:5px;background:rgb(180,174,182)"></div>
<div class="a" style="left:547px;top:389px;width:5px;height:5px;background:rgb(157,157,147)"></div>
<div class="a" style="left:552px;top:389px;width:5px;height:5px;background:rgb(183,183,175)"></div>
<div class="a" style="left:557px;top:389px;width:5px;height:5px;background:rgb(203,198,204)"></div>
<div class="a" style="left:562px;top:389px;width:5px;height:5px;background:rgb(177,179,188)"></div>
<div class="a" style="left:567px;top:389px;width:5px;height:5px;background:rgb(230,231,234)"></div>
<div class="a" style="left:534px;top:394px;width:3px;height:5px;background:rgb(244,243,243)"></div>
<div class="a" style="left:537px;top:394px;width:5px;height:5px;background:rgb(245,244,244)"></div>
<div class="a" style="left:542px;top:394px;width:5px;height:5px;background:rgb(246,246,246)"></div>
<div class="a" style="left:547px;top:394px;width:5px;height:5px;background:rgb(246,246,246)"></div>
<div class="a" style="left:552px;top:394px;width:5px;height:5px;background:rgb(238,238,238)"></div>
<div class="a" style="left:557px;top:394px;width:5px;height:5px;background:rgb(247,247,248)"></div>
<div class="a" style="left:562px;top:394px;width:5px;height:5px;background:rgb(241,241,243)"></div>
<div class="a" style="left:567px;top:394px;width:5px;height:5px;background:rgb(248,249,249)"></div>
<div class="a" style="left:534px;top:399px;width:3px;height:5px;background:rgb(237,237,236)"></div>
<div class="a" style="left:537px;top:399px;width:5px;height:5px;background:rgb(240,240,239)"></div>
<div class="a" style="left:542px;top:399px;width:5px;height:5px;background:rgb(235,235,233)"></div>
<div class="a" style="left:547px;top:399px;width:5px;height:5px;background:rgb(236,238,238)"></div>
<div class="a" style="left:552px;top:399px;width:5px;height:5px;background:rgb(241,240,240)"></div>
<div class="a" style="left:557px;top:399px;width:5px;height:5px;background:rgb(237,235,237)"></div>
<div class="a" style="left:562px;top:399px;width:5px;height:5px;background:rgb(240,238,240)"></div>
<div class="a" style="left:567px;top:399px;width:5px;height:5px;background:rgb(244,243,242)"></div>
<div class="a" style="left:572px;top:399px;width:5px;height:5px;background:rgb(245,245,246)"></div>
<div class="a" style="left:577px;top:399px;width:5px;height:5px;background:rgb(246,246,246)"></div>
<div class="a" style="left:582px;top:399px;width:5px;height:5px;background:rgb(245,246,246)"></div>
<div class="a" style="left:587px;top:399px;width:5px;height:5px;background:rgb(245,245,246)"></div>
<div class="a" style="left:592px;top:399px;width:5px;height:5px;background:rgb(246,245,246)"></div>
<div class="a" style="left:597px;top:399px;width:5px;height:5px;background:rgb(246,246,246)"></div>
<div class="a" style="left:602px;top:399px;width:5px;height:5px;background:rgb(246,246,245)"></div>
<div class="a" style="left:607px;top:399px;width:5px;height:5px;background:rgb(246,246,246)"></div>
<div class="a" style="left:612px;top:399px;width:5px;height:5px;background:rgb(245,246,246)"></div>
<div class="a" style="left:617px;top:399px;width:0px;height:5px;background:rgb(246,245,246)"></div>
<div class="a" style="left:534px;top:404px;width:3px;height:5px;background:rgb(154,145,156)"></div>
<div class="a" style="left:537px;top:404px;width:5px;height:5px;background:rgb(150,150,150)"></div>
<div class="a" style="left:542px;top:404px;width:5px;height:5px;background:rgb(179,181,190)"></div>
<div class="a" style="left:547px;top:404px;width:5px;height:5px;background:rgb(180,182,190)"></div>
<div class="a" style="left:552px;top:404px;width:5px;height:5px;background:rgb(171,171,171)"></div>
<div class="a" style="left:557px;top:404px;width:5px;height:5px;background:rgb(182,184,192)"></div>
<div class="a" style="left:562px;top:404px;width:5px;height:5px;background:rgb(161,164,175)"></div>
<div class="a" style="left:567px;top:404px;width:5px;height:5px;background:rgb(210,210,206)"></div>
<div class="a" style="left:534px;top:409px;width:3px;height:5px;background:rgb(168,171,180)"></div>
<div class="a" style="left:537px;top:409px;width:5px;height:5px;background:rgb(205,205,199)"></div>
<div class="a" style="left:542px;top:409px;width:5px;height:5px;background:rgb(198,194,192)"></div>
<div class="a" style="left:547px;top:409px;width:5px;height:5px;background:rgb(151,161,162)"></div>
<div class="a" style="left:552px;top:409px;width:5px;height:5px;background:rgb(184,186,194)"></div>
<div class="a" style="left:557px;top:409px;width:5px;height:5px;background:rgb(169,177,179)"></div>
<div class="a" style="left:562px;top:409px;width:5px;height:5px;background:rgb(192,186,193)"></div>
<div class="a" style="left:567px;top:409px;width:5px;height:5px;background:rgb(208,212,213)"></div>
<div class="a" style="left:534px;top:414px;width:3px;height:5px;background:rgb(250,249,249)"></div>
<div class="a" style="left:537px;top:414px;width:5px;height:5px;background:rgb(248,248,249)"></div>
<div class="a" style="left:542px;top:414px;width:5px;height:5px;background:rgb(248,248,247)"></div>
<div class="a" style="left:547px;top:414px;width:5px;height:5px;background:rgb(246,246,246)"></div>
<div class="a" style="left:552px;top:414px;width:5px;height:5px;background:rgb(244,244,243)"></div>
<div class="a" style="left:557px;top:414px;width:5px;height:5px;background:rgb(243,244,244)"></div>
<div class="a" style="left:562px;top:414px;width:5px;height:5px;background:rgb(245,244,244)"></div>
<div class="a" style="left:567px;top:414px;width:5px;height:5px;background:rgb(250,250,250)"></div>
<div class="a" style="left:534px;top:419px;width:3px;height:5px;background:rgb(215,212,216)"></div>
<div class="a" style="left:537px;top:419px;width:5px;height:5px;background:rgb(217,217,214)"></div>
<div class="a" style="left:542px;top:419px;width:5px;height:5px;background:rgb(215,215,211)"></div>
<div class="a" style="left:547px;top:419px;width:5px;height:5px;background:rgb(213,217,217)"></div>
<div class="a" style="left:552px;top:419px;width:5px;height:5px;background:rgb(231,229,231)"></div>
<div class="a" style="left:557px;top:419px;width:5px;height:5px;background:rgb(224,224,221)"></div>
<div class="a" style="left:562px;top:419px;width:5px;height:5px;background:rgb(219,216,215)"></div>
<div class="a" style="left:567px;top:419px;width:5px;height:5px;background:rgb(231,232,235)"></div>
<div class="a" style="left:572px;top:419px;width:5px;height:5px;background:rgb(245,245,246)"></div>
<div class="a" style="left:577px;top:419px;width:5px;height:5px;background:rgb(246,246,245)"></div>
<div class="a" style="left:582px;top:419px;width:5px;height:5px;background:rgb(245,245,246)"></div>
<div class="a" style="left:587px;top:419px;width:5px;height:5px;background:rgb(246,246,246)"></div>
<div class="a" style="left:592px;top:419px;width:5px;height:5px;background:rgb(246,246,245)"></div>
<div class="a" style="left:597px;top:419px;width:5px;height:5px;background:rgb(246,245,246)"></div>
<div class="a" style="left:602px;top:419px;width:5px;height:5px;background:rgb(245,245,246)"></div>
<div class="a" style="left:607px;top:419px;width:5px;height:5px;background:rgb(246,246,246)"></div>
<div class="a" style="left:612px;top:419px;width:5px;height:5px;background:rgb(246,246,246)"></div>
<div class="a" style="left:617px;top:419px;width:0px;height:5px;background:rgb(246,246,245)"></div>
<div class="a" style="left:534px;top:424px;width:3px;height:5px;background:rgb(157,166,167)"></div>
<div class="a" style="left:537px;top:424px;width:5px;height:5px;background:rgb(197,197,197)"></div>
<div class="a" style="left:542px;top:424px;width:5px;height:5px;background:rgb(202,198,197)"></div>
<div class="a" style="left:547px;top:424px;width:5px;height:5px;background:rgb(158,150,160)"></div>
<div class="a" style="left:552px;top:424px;width:5px;height:5px;background:rgb(163,163,163)"></div>
<div class="a" style="left:557px;top:424px;width:5px;height:5px;background:rgb(152,155,166)"></div>
<div class="a" style="left:562px;top:424px;width:5px;height:5px;background:rgb(174,177,186)"></div>
<div class="a" style="left:567px;top:424px;width:5px;height:5px;background:rgb(206,207,213)"></div>
<div class="a" style="left:534px;top:429px;width:3px;height:5px;background:rgb(218,220,224)"></div>
<div class="a" style="left:537px;top:429px;width:5px;height:5px;background:rgb(205,207,212)"></div>
<div class="a" style="left:542px;top:429px;width:5px;height:5px;background:rgb(181,188,189)"></div>
<div class="a" style="left:547px;top:429px;width:5px;height:5px;background:rgb(211,211,206)"></div>
<div class="a" style="left:552px;top:429px;width:5px;height:5px;background:rgb(187,182,180)"></div>
<div class="a" style="left:557px;top:429px;width:5px;height:5px;background:rgb(173,181,182)"></div>
<div class="a" style="left:562px;top:429px;width:5px;height:5px;background:rgb(183,176,184)"></div>
<div class="a" style="left:567px;top:429px;width:5px;height:5px;background:rgb(227,227,227)"></div>
<div class="a" style="left:534px;top:434px;width:3px;height:5px;background:rgb(251,251,251)"></div>
<div class="a" style="left:537px;top:434px;width:5px;height:5px;background:rgb(252,252,252)"></div>
<div class="a" style="left:542px;top:434px;width:5px;height:5px;background:rgb(251,250,250)"></div>
<div class="a" style="left:547px;top:434px;width:5px;height:5px;background:rgb(249,249,250)"></div>
<div class="a" style="left:552px;top:434px;width:5px;height:5px;background:rgb(250,250,251)"></div>
<div class="a" style="left:557px;top:434px;width:5px;height:5px;background:rgb(252,252,251)"></div>
<div class="a" style="left:562px;top:434px;width:5px;height:5px;background:rgb(250,250,250)"></div>
<div class="a" style="left:567px;top:434px;width:5px;height:5px;background:rgb(252,253,253)"></div>
<div class="a" style="left:534px;top:439px;width:3px;height:5px;background:rgb(199,199,199)"></div>
<div class="a" style="left:537px;top:439px;width:5px;height:5px;background:rgb(207,203,201)"></div>
<div class="a" style="left:542px;top:439px;width:5px;height:5px;background:rgb(196,192,190)"></div>
<div class="a" style="left:547px;top:439px;width:5px;height:5px;background:rgb(211,215,216)"></div>
<div class="a" style="left:552px;top:439px;width:5px;height:5px;background:rgb(223,220,219)"></div>
<div class="a" style="left:557px;top:439px;width:5px;height:5px;background:rgb(205,205,205)"></div>
<div class="a" style="left:562px;top:439px;width:5px;height:5px;background:rgb(223,221,220)"></div>
<div class="a" style="left:567px;top:439px;width:5px;height:5px;background:rgb(228,228,228)"></div>
<div class="a" style="left:572px;top:439px;width:5px;height:5px;background:rgb(246,246,246)"></div>
<div class="a" style="left:577px;top:439px;width:5px;height:5px;background:rgb(246,246,246)"></div>
<div class="a" style="left:582px;top:439px;width:5px;height:5px;background:rgb(246,246,246)"></div>
<div class="a" style="left:587px;top:439px;width:5px;height:5px;background:rgb(245,245,246)"></div>
<div class="a" style="left:592px;top:439px;width:5px;height:5px;background:rgb(246,245,246)"></div>
<div class="a" style="left:597px;top:439px;width:5px;height:5px;background:rgb(245,246,246)"></div>
<div class="a" style="left:602px;top:439px;width:5px;height:5px;background:rgb(246,246,245)"></div>
<div class="a" style="left:607px;top:439px;width:5px;height:5px;background:rgb(246,246,246)"></div>
<div class="a" style="left:612px;top:439px;width:5px;height:5px;background:rgb(246,246,246)"></div>
<div class="a" style="left:617px;top:439px;width:0px;height:5px;background:rgb(246,246,245)"></div>
<div class="a" style="left:534px;top:444px;width:3px;height:5px;background:rgb(169,172,181)"></div>
<div class="a" style="left:537px;top:444px;width:5px;height:5px;background:rgb(154,163,165)"></div>
<div class="a" style="left:542px;top:444px;width:5px;height:5px;background:rgb(139,143,156)"></div>
<div class="a" style="left:547px;top:444px;width:5px;height:5px;background:rgb(145,149,161)"></div>
<div class="a" style="left:552px;top:444px;width:5px;height:5px;background:rgb(182,182,174)"></div>
<div class="a" style="left:557px;top:444px;width:5px;height:5px;background:rgb(183,177,175)"></div>
<div class="a" style="left:562px;top:444px;width:5px;height:5px;background:rgb(165,165,156)"></div>
<div class="a" style="left:567px;top:444px;width:5px;height:5px;background:rgb(232,230,233)"></div>
<div class="a" style="left:534px;top:449px;width:3px;height:5px;background:rgb(220,217,216)"></div>
<div class="a" style="left:537px;top:449px;width:5px;height:5px;background:rgb(192,194,201)"></div>
<div class="a" style="left:542px;top:449px;width:5px;height:5px;background:rgb(197,192,198)"></div>
<div class="a" style="left:547px;top:449px;width:5px;height:5px;background:rgb(201,203,209)"></div>
<div class="a" style="left:552px;top:449px;width:5px;height:5px;background:rgb(217,219,223)"></div>
<div class="a" style="left:557px;top:449px;width:5px;height:5px;background:rgb(189,192,199)"></div>
<div class="a" style="left:562px;top:449px;width:5px;height:5px;background:rgb(204,201,199)"></div>
<div class="a" style="left:567px;top:449px;width:5px;height:5px;background:rgb(237,237,235)"></div>
<div class="a" style="left:534px;top:454px;width:3px;height:5px;background:rgb(245,245,246)"></div>
<div class="a" style="left:537px;top:454px;width:5px;height:5px;background:rgb(246,245,246)"></div>
<div class="a" style="left:542px;top:454px;width:5px;height:5px;background:rgb(245,245,246)"></div>
<div class="a" style="left:547px;top:454px;width:5px;height:5px;background:rgb(245,245,246)"></div>
<div class="a" style="left:552px;top:454px;width:5px;height:5px;background:rgb(246,245,246)"></div>
<div class="a" style="left:557px;top:454px;width:5px;height:5px;background:rgb(246,246,245)"></div>
<div class="a" style="left:562px;top:454px;width:5px;height:5px;background:rgb(246,246,246)"></div>
<div class="a" style="left:567px;top:454px;width:5px;height:5px;background:rgb(246,246,245)"></div>
<div class="a" style="left:572px;top:454px;width:5px;height:5px;background:rgb(245,246,246)"></div>
<div class="a" style="left:577px;top:454px;width:5px;height:5px;background:rgb(246,246,245)"></div>
<div class="a" style="left:582px;top:454px;width:5px;height:5px;background:rgb(245,245,246)"></div>
<div class="a" style="left:587px;top:454px;width:5px;height:5px;background:rgb(245,246,246)"></div>
<div class="a" style="left:592px;top:454px;width:5px;height:5px;background:rgb(245,246,246)"></div>
<div class="a" style="left:597px;top:454px;width:5px;height:5px;background:rgb(246,246,245)"></div>
<div class="a" style="left:602px;top:454px;width:5px;height:5px;background:rgb(246,245,246)"></div>
<div class="a" style="left:607px;top:454px;width:5px;height:5px;background:rgb(245,246,246)"></div>
<div class="a" style="left:612px;top:454px;width:5px;height:5px;background:rgb(246,246,245)"></div>
<div class="a" style="left:617px;top:454px;width:0px;height:5px;background:rgb(245,246,246)"></div>
<div class="a" style="left:534px;top:459px;width:3px;height:5px;background:rgb(197,197,191)"></div>
<div class="a" style="left:537px;top:459px;width:5px;height:5px;background:rgb(190,190,184)"></div>
<div class="a" style="left:542px;top:459px;width:5px;height:5px;background:rgb(206,206,206)"></div>
<div class="a" style="left:547px;top:459px;width:5px;height:5px;background:rgb(211,207,206)"></div>
<div class="a" style="left:552px;top:459px;width:5px;height:5px;background:rgb(214,215,220)"></div>
<div class="a" style="left:557px;top:459px;width:5px;height:5px;background:rgb(181,176,173)"></div>
<div class="a" style="left:562px;top:459px;width:5px;height:5px;background:rgb(215,219,219)"></div>
<div class="a" style="left:567px;top:459px;width:5px;height:5px;background:rgb(238,239,240)"></div>
<div class="a" style="left:534px;top:464px;width:3px;height:5px;background:rgb(186,188,196)"></div>
<div class="a" style="left:537px;top:464px;width:5px;height:5px;background:rgb(157,148,159)"></div>
<div class="a" style="left:542px;top:464px;width:5px;height:5px;background:rgb(145,155,157)"></div>
<div class="a" style="left:547px;top:464px;width:5px;height:5px;background:rgb(180,180,180)"></div>
<div class="a" style="left:552px;top:464px;width:5px;height:5px;background:rgb(145,145,145)"></div>
<div class="a" style="left:557px;top:464px;width:5px;height:5px;background:rgb(168,177,178)"></div>
<div class="a" style="left:562px;top:464px;width:5px;height:5px;background:rgb(205,201,199)"></div>
<div class="a" style="left:567px;top:464px;width:5px;height:5px;background:rgb(207,208,214)"></div>
<div class="a" style="left:534px;top:469px;width:3px;height:5px;background:rgb(230,228,227)"></div>
<div class="a" style="left:537px;top:469px;width:5px;height:5px;background:rgb(233,232,231)"></div>
<div class="a" style="left:542px;top:469px;width:5px;height:5px;background:rgb(221,224,225)"></div>
<div class="a" style="left:547px;top:469px;width:5px;height:5px;background:rgb(235,236,238)"></div>
<div class="a" style="left:552px;top:469px;width:5px;height:5px;background:rgb(238,236,236)"></div>
<div class="a" style="left:557px;top:469px;width:5px;height:5px;background:rgb(225,228,229)"></div>
<div class="a" style="left:562px;top:469px;width:5px;height:5px;background:rgb(216,216,212)"></div>
<div class="a" style="left:567px;top:469px;width:5px;height:5px;background:rgb(236,238,238)"></div>
<div class="a" style="left:534px;top:474px;width:3px;height:5px;background:rgb(246,246,246)"></div>
<div class="a" style="left:537px;top:474px;width:5px;height:5px;background:rgb(245,245,246)"></div>
<div class="a" style="left:542px;top:474px;width:5px;height:5px;background:rgb(246,246,245)"></div>
<div class="a" style="left:547px;top:474px;width:5px;height:5px;background:rgb(246,246,246)"></div>
<div class="a" style="left:552px;top:474px;width:5px;height:5px;background:rgb(246,245,246)"></div>
<div class="a" style="left:557px;top:474px;width:5px;height:5px;background:rgb(245,245,246)"></div>
<div class="a" style="left:562px;top:474px;width:5px;height:5px;background:rgb(246,246,245)"></div>
<div class="a" style="left:567px;top:474px;width:5px;height:5px;background:rgb(245,245,246)"></div>
<div class="a" style="left:572px;top:474px;width:5px;height:5px;background:rgb(245,246,246)"></div>
<div class="a" style="left:577px;top:474px;width:5px;height:5px;background:rgb(246,246,245)"></div>
<div class="a" style="left:582px;top:474px;width:5px;height:5px;background:rgb(245,245,246)"></div>
<div class="a" style="left:587px;top:474px;width:5px;height:5px;background:rgb(245,245,246)"></div>
<div class="a" style="left:592px;top:474px;width:5px;height:5px;background:rgb(245,246,246)"></div>
<div class="a" style="left:597px;top:474px;width:5px;height:5px;background:rgb(246,245,246)"></div>
<div class="a" style="left:602px;top:474px;width:5px;height:5px;background:rgb(245,246,246)"></div>
<div class="a" style="left:607px;top:474px;width:5px;height:5px;background:rgb(246,246,246)"></div>
<div class="a" style="left:612px;top:474px;width:5px;height:5px;background:rgb(245,245,246)"></div>
<div class="a" style="left:617px;top:474px;width:0px;height:5px;background:rgb(245,246,246)"></div>
<div class="a" style="left:534px;top:479px;width:3px;height:5px;background:rgb(188,183,190)"></div>
<div class="a" style="left:537px;top:479px;width:5px;height:5px;background:rgb(198,203,204)"></div>
<div class="a" style="left:542px;top:479px;width:5px;height:5px;background:rgb(157,166,168)"></div>
<div class="a" style="left:547px;top:479px;width:5px;height:5px;background:rgb(213,210,208)"></div>
<div class="a" style="left:552px;top:479px;width:5px;height:5px;background:rgb(167,167,167)"></div>
<div class="a" style="left:557px;top:479px;width:5px;height:5px;background:rgb(153,153,153)"></div>
<div class="a" style="left:562px;top:479px;width:5px;height:5px;background:rgb(186,186,178)"></div>
<div class="a" style="left:567px;top:479px;width:5px;height:5px;background:rgb(234,232,234)"></div>
<div class="a" style="left:534px;top:484px;width:3px;height:5px;background:rgb(181,181,173)"></div>
<div class="a" style="left:537px;top:484px;width:5px;height:5px;background:rgb(173,173,165)"></div>
<div class="a" style="left:542px;top:484px;width:5px;height:5px;background:rgb(134,146,147)"></div>
<div class="a" style="left:547px;top:484px;width:5px;height:5px;background:rgb(156,159,170)"></div>
<div class="a" style="left:552px;top:484px;width:5px;height:5px;background:rgb(188,182,189)"></div>
<div class="a" style="left:557px;top:484px;width:5px;height:5px;background:rgb(153,156,168)"></div>
<div class="a" style="left:562px;top:484px;width:5px;height:5px;background:rgb(175,182,184)"></div>
<div class="a" style="left:567px;top:484px;width:5px;height:5px;background:rgb(201,203,209)"></div>
<div class="a" style="left:534px;top:489px;width:3px;height:5px;background:rgb(248,247,248)"></div>
<div class="a" style="left:537px;top:489px;width:5px;height:5px;background:rgb(239,240,241)"></div>
<div class="a" style="left:542px;top:489px;width:5px;height:5px;background:rgb(244,243,243)"></div>
<div class="a" style="left:547px;top:489px;width:5px;height:5px;background:rgb(247,247,246)"></div>
<div class="a" style="left:552px;top:489px;width:5px;height:5px;background:rgb(239,238,240)"></div>
<div class="a" style="left:557px;top:489px;width:5px;height:5px;background:rgb(238,238,238)"></div>
<div class="a" style="left:562px;top:489px;width:5px;height:5px;background:rgb(244,245,245)"></div>
<div class="a" style="left:567px;top:489px;width:5px;height:5px;background:rgb(251,251,251)"></div>
<div class="a" style="left:534px;top:494px;width:3px;height:5px;background:rgb(240,240,239)"></div>
<div class="a" style="left:537px;top:494px;width:5px;height:5px;background:rgb(240,241,241)"></div>
<div class="a" style="left:542px;top:494px;width:5px;height:5px;background:rgb(234,234,234)"></div>
<div class="a" style="left:547px;top:494px;width:5px;height:5px;background:rgb(240,239,238)"></div>
<div class="a" style="left:552px;top:494px;width:5px;height:5px;background:rgb(233,235,235)"></div>
<div class="a" style="left:557px;top:494px;width:5px;height:5px;background:rgb(239,239,241)"></div>
<div class="a" style="left:562px;top:494px;width:5px;height:5px;background:rgb(241,241,240)"></div>
<div class="a" style="left:567px;top:494px;width:5px;height:5px;background:rgb(242,243,244)"></div>
<div class="a" style="left:572px;top:494px;width:5px;height:5px;background:rgb(246,246,246)"></div>
<div class="a" style="left:577px;top:494px;width:5px;height:5px;background:rgb(246,245,246)"></div>
<div class="a" style="left:582px;top:494px;width:5px;height:5px;background:rgb(245,245,246)"></div>
<div class="a" style="left:587px;top:494px;width:5px;height:5px;background:rgb(245,245,246)"></div>
<div class="a" style="left:592px;top:494px;width:5px;height:5px;background:rgb(246,246,246)"></div>
<div class="a" style="left:597px;top:494px;width:5px;height:5px;background:rgb(246,246,245)"></div>
<div class="a" style="left:602px;top:494px;width:5px;height:5px;background:rgb(246,246,245)"></div>
<div class="a" style="left:607px;top:494px;width:5px;height:5px;background:rgb(245,246,246)"></div>
<div class="a" style="left:612px;top:494px;width:5px;height:5px;background:rgb(246,246,245)"></div>
<div class="a" style="left:617px;top:494px;width:0px;height:5px;background:rgb(245,245,246)"></div>
<div class="a" style="left:534px;top:499px;width:3px;height:5px;background:rgb(185,180,178)"></div>
<div class="a" style="left:537px;top:499px;width:5px;height:5px;background:rgb(176,183,184)"></div>
<div class="a" style="left:542px;top:499px;width:5px;height:5px;background:rgb(183,186,193)"></div>
<div class="a" style="left:547px;top:499px;width:5px;height:5px;background:rgb(202,202,202)"></div>
<div class="a" style="left:552px;top:499px;width:5px;height:5px;background:rgb(144,148,160)"></div>
<div class="a" style="left:557px;top:499px;width:5px;height:5px;background:rgb(167,160,169)"></div>
<div class="a" style="left:562px;top:499px;width:5px;height:5px;background:rgb(154,154,154)"></div>
<div class="a" style="left:567px;top:499px;width:5px;height:5px;background:rgb(219,223,223)"></div>
<div class="a" style="left:534px;top:504px;width:3px;height:5px;background:rgb(176,176,168)"></div>
<div class="a" style="left:537px;top:504px;width:5px;height:5px;background:rgb(208,204,209)"></div>
<div class="a" style="left:542px;top:504px;width:5px;height:5px;background:rgb(175,178,186)"></div>
<div class="a" style="left:547px;top:504px;width:5px;height:5px;background:rgb(214,210,215)"></div>
<div class="a" style="left:552px;top:504px;width:5px;height:5px;background:rgb(168,160,169)"></div>
<div class="a" style="left:557px;top:504px;width:5px;height:5px;background:rgb(193,188,194)"></div>
<div class="a" style="left:562px;top:504px;width:5px;height:5px;background:rgb(163,166,176)"></div>
<div class="a" style="left:567px;top:504px;width:5px;height:5px;background:rgb(213,213,213)"></div>
<div class="a" style="left:534px;top:509px;width:3px;height:5px;background:rgb(247,246,246)"></div>
<div class="a" style="left:537px;top:509px;width:5px;height:5px;background:rgb(244,244,244)"></div>
<div class="a" style="left:542px;top:509px;width:5px;height:5px;background:rgb(245,244,245)"></div>
<div class="a" style="left:547px;top:509px;width:5px;height:5px;background:rgb(246,245,246)"></div>
<div class="a" style="left:552px;top:509px;width:5px;height:5px;background:rgb(246,245,245)"></div>
<div class="a" style="left:557px;top:509px;width:5px;height:5px;background:rgb(249,249,250)"></div>
<div class="a" style="left:562px;top:509px;width:5px;height:5px;background:rgb(246,245,245)"></div>
<div class="a" style="left:567px;top:509px;width:5px;height:5px;background:rgb(251,251,251)"></div>
<div class="a" style="left:534px;top:514px;width:3px;height:5px;background:rgb(222,219,222)"></div>
<div class="a" style="left:537px;top:514px;width:5px;height:5px;background:rgb(231,231,231)"></div>
<div class="a" style="left:542px;top:514px;width:5px;height:5px;background:rgb(219,219,215)"></div>
<div class="a" style="left:547px;top:514px;width:5px;height:5px;background:rgb(227,227,224)"></div>
<div class="a" style="left:552px;top:514px;width:5px;height:5px;background:rgb(217,214,218)"></div>
<div class="a" style="left:557px;top:514px;width:5px;height:5px;background:rgb(212,212,212)"></div>
<div class="a" style="left:562px;top:514px;width:5px;height:5px;background:rgb(229,229,229)"></div>
<div class="a" style="left:567px;top:514px;width:5px;height:5px;background:rgb(239,238,240)"></div>
<div class="a" style="left:572px;top:514px;width:5px;height:5px;background:rgb(246,246,245)"></div>
<div class="a" style="left:577px;top:514px;width:5px;height:5px;background:rgb(245,246,246)"></div>
<div class="a" style="left:582px;top:514px;width:5px;height:5px;background:rgb(246,246,245)"></div>
<div class="a" style="left:587px;top:514px;width:5px;height:5px;background:rgb(245,246,246)"></div>
<div class="a" style="left:592px;top:514px;width:5px;height:5px;background:rgb(245,245,246)"></div>
<div class="a" style="left:597px;top:514px;width:5px;height:5px;background:rgb(246,245,246)"></div>
<div class="a" style="left:602px;top:514px;width:5px;height:5px;background:rgb(245,245,246)"></div>
<div class="a" style="left:607px;top:514px;width:5px;height:5px;background:rgb(245,245,246)"></div>
<div class="a" style="left:612px;top:514px;width:5px;height:5px;background:rgb(246,245,246)"></div>
<div class="a" style="left:617px;top:514px;width:0px;height:5px;background:rgb(246,245,246)"></div>
<div class="a" style="left:534px;top:519px;width:3px;height:5px;background:rgb(145,145,134)"></div>
<div class="a" style="left:537px;top:519px;width:5px;height:5px;background:rgb(157,150,147)"></div>
<div class="a" style="left:542px;top:519px;width:5px;height:5px;background:rgb(179,172,180)"></div>
<div class="a" style="left:547px;top:519px;width:5px;height:5px;background:rgb(192,188,186)"></div>
<div class="a" style="left:552px;top:519px;width:5px;height:5px;background:rgb(170,163,172)"></div>
<div class="a" style="left:557px;top:519px;width:5px;height:5px;background:rgb(194,194,194)"></div>
<div class="a" style="left:562px;top:519px;width:5px;height:5px;background:rgb(193,199,200)"></div>
<div class="a" style="left:567px;top:519px;width:5px;height:5px;background:rgb(215,212,216)"></div>
<div class="a" style="left:534px;top:524px;width:3px;height:5px;background:rgb(207,207,207)"></div>
<div class="a" style="left:537px;top:524px;width:5px;height:5px;background:rgb(216,216,212)"></div>
<div class="a" style="left:542px;top:524px;width:5px;height:5px;background:rgb(216,220,220)"></div>
<div class="a" style="left:547px;top:524px;width:5px;height:5px;background:rgb(181,175,173)"></div>
<div class="a" style="left:552px;top:524px;width:5px;height:5px;background:rgb(192,187,193)"></div>
<div class="a" style="left:557px;top:524px;width:5px;height:5px;background:rgb(201,196,202)"></div>
<div class="a" style="left:562px;top:524px;width:5px;height:5px;background:rgb(199,199,193)"></div>
<div class="a" style="left:567px;top:524px;width:5px;height:5px;background:rgb(231,230,229)"></div>
<div class="a" style="left:534px;top:529px;width:3px;height:5px;background:rgb(249,249,249)"></div>
<div class="a" style="left:537px;top:529px;width:5px;height:5px;background:rgb(252,251,251)"></div>
<div class="a" style="left:542px;top:529px;width:5px;height:5px;background:rgb(249,249,249)"></div>
<div class="a" style="left:547px;top:529px;width:5px;height:5px;background:rgb(251,251,251)"></div>
<div class="a" style="left:552px;top:529px;width:5px;height:5px;background:rgb(250,250,249)"></div>
<div class="a" style="left:557px;top:529px;width:5px;height:5px;background:rgb(249,249,248)"></div>
<div class="a" style="left:562px;top:529px;width:5px;height:5px;background:rgb(251,251,252)"></div>
<div class="a" style="left:567px;top:529px;width:5px;height:5px;background:rgb(253,253,253)"></div>
<div class="a" style="left:534px;top:534px;width:3px;height:5px;background:rgb(217,217,217)"></div>
<div class="a" style="left:537px;top:534px;width:5px;height:5px;background:rgb(210,214,215)"></div>
<div class="a" style="left:542px;top:534px;width:5px;height:5px;background:rgb(219,216,220)"></div>
<div class="a" style="left:547px;top:534px;width:5px;height:5px;background:rgb(208,205,203)"></div>
<div class="a" style="left:552px;top:534px;width:5px;height:5px;background:rgb(195,197,204)"></div>
<div class="a" style="left:557px;top:534px;width:5px;height:5px;background:rgb(207,207,202)"></div>
<div class="a" style="left:562px;top:534px;width:5px;height:5px;background:rgb(206,208,213)"></div>
<div class="a" style="left:567px;top:534px;width:5px;height:5px;background:rgb(235,235,234)"></div>
<div class="a" style="left:572px;top:534px;width:5px;height:5px;background:rgb(246,245,246)"></div>
<div class="a" style="left:577px;top:534px;width:5px;height:5px;background:rgb(246,246,245)"></div>
<div class="a" style="left:582px;top:534px;width:5px;height:5px;background:rgb(246,246,245)"></div>
<div class="a" style="left:587px;top:534px;width:5px;height:5px;background:rgb(245,246,246)"></div>
<div class="a" style="left:592px;top:534px;width:5px;height:5px;background:rgb(246,245,246)"></div>
<div class="a" style="left:597px;top:534px;width:5px;height:5px;background:rgb(245,245,246)"></div>
<div class="a" style="left:602px;top:534px;width:5px;height:5px;background:rgb(246,246,245)"></div>
<div class="a" style="left:607px;top:534px;width:5px;height:5px;background:rgb(245,246,246)"></div>
<div class="a" style="left:612px;top:534px;width:5px;height:5px;background:rgb(246,246,245)"></div>
<div class="a" style="left:617px;top:534px;width:0px;height:5px;background:rgb(245,246,246)"></div>
<div class="a" style="left:534px;top:539px;width:3px;height:5px;background:rgb(195,201,202)"></div>
<div class="a" style="left:537px;top:539px;width:5px;height:5px;background:rgb(204,209,210)"></div>
<div class="a" style="left:542px;top:539px;width:5px;height:5px;background:rgb(158,151,147)"></div>
<div class="a" style="left:547px;top:539px;width:5px;height:5px;background:rgb(138,142,155)"></div>
<div class="a" style="left:552px;top:539px;width:5px;height:5px;background:rgb(164,156,165)"></div>
<div class="a" style="left:557px;top:539px;width:5px;height:5px;background:rgb(183,190,191)"></div>
<div class="a" style="left:562px;top:539px;width:5px;height:5px;background:rgb(205,205,199)"></div>
<div class="a" style="left:567px;top:539px;width:5px;height:5px;background:rgb(203,203,203)"></div>
<div class="a" style="left:534px;top:544px;width:3px;height:5px;background:rgb(227,227,224)"></div>
<div class="a" style="left:537px;top:544px;width:5px;height:5px;background:rgb(204,200,199)"></div>
<div class="a" style="left:542px;top:544px;width:5px;height:5px;background:rgb(221,218,217)"></div>
<div class="a" style="left:547px;top:544px;width:5px;height:5px;background:rgb(194,199,200)"></div>
<div class="a" style="left:552px;top:544px;width:5px;height:5px;background:rgb(202,204,210)"></div>
<div class="a" style="left:557px;top:544px;width:5px;height:5px;background:rgb(217,220,221)"></div>
<div class="a" style="left:562px;top:544px;width:5px;height:5px;background:rgb(210,214,214)"></div>
<div class="a" style="left:567px;top:544px;width:5px;height:5px;background:rgb(239,240,240)"></div>
<div class="a" style="left:534px;top:549px;width:3px;height:5px;background:rgb(246,246,245)"></div>
<div class="a" style="left:537px;top:549px;width:5px;height:5px;background:rgb(246,246,245)"></div>
<div class="a" style="left:542px;top:549px;width:5px;height:5px;background:rgb(246,245,246)"></div>
<div class="a" style="left:547px;top:549px;width:5px;height:5px;background:rgb(246,246,245)"></div>
<div class="a" style="left:552px;top:549px;width:5px;height:5px;background:rgb(246,246,246)"></div>
<div class="a" style="left:557px;top:549px;width:5px;height:5px;background:rgb(246,246,246)"></div>
<div class="a" style="left:562px;top:549px;width:5px;height:5px;background:rgb(245,245,246)"></div>
<div class="a" style="left:567px;top:549px;width:5px;height:5px;background:rgb(246,245,246)"></div>
<div class="a" style="left:572px;top:549px;width:5px;height:5px;background:rgb(246,246,245)"></div>
<div class="a" style="left:577px;top:549px;width:5px;height:5px;background:rgb(246,246,245)"></div>
<div class="a" style="left:582px;top:549px;width:5px;height:5px;background:rgb(246,245,246)"></div>
<div class="a" style="left:587px;top:549px;width:5px;height:5px;background:rgb(246,246,245)"></div>
<div class="a" style="left:592px;top:549px;width:5px;height:5px;background:rgb(246,246,245)"></div>
<div class="a" style="left:597px;top:549px;width:5px;height:5px;background:rgb(246,246,246)"></div>
<div class="a" style="left:602px;top:549px;width:5px;height:5px;background:rgb(245,245,246)"></div>
<div class="a" style="left:607px;top:549px;width:5px;height:5px;background:rgb(246,245,246)"></div>
<div class="a" style="left:612px;top:549px;width:5px;height:5px;background:rgb(245,246,246)"></div>
<div class="a" style="left:617px;top:549px;width:0px;height:5px;background:rgb(246,246,245)"></div>
<div class="a" style="left:534px;top:554px;width:3px;height:5px;background:rgb(219,219,219)"></div>
<div class="a" style="left:537px;top:554px;width:5px;height:5px;background:rgb(217,217,213)"></div>
<div class="a" style="left:542px;top:554px;width:5px;height:5px;background:rgb(198,204,204)"></div>
<div class="a" style="left:547px;top:554px;width:5px;height:5px;background:rgb(210,206,210)"></div>
<div class="a" style="left:552px;top:554px;width:5px;height:5px;background:rgb(190,184,191)"></div>
<div class="a" style="left:557px;top:554px;width:5px;height:5px;background:rgb(211,208,212)"></div>
<div class="a" style="left:562px;top:554px;width:5px;height:5px;background:rgb(212,212,207)"></div>
<div class="a" style="left:567px;top:554px;width:5px;height:5px;background:rgb(229,229,226)"></div>
<div class="a" style="left:534px;top:559px;width:3px;height:5px;background:rgb(202,197,203)"></div>
<div class="a" style="left:537px;top:559px;width:5px;height:5px;background:rgb(193,195,202)"></div>
<div class="a" style="left:542px;top:559px;width:5px;height:5px;background:rgb(176,176,168)"></div>
<div class="a" style="left:547px;top:559px;width:5px;height:5px;background:rgb(173,173,164)"></div>
<div class="a" style="left:552px;top:559px;width:5px;height:5px;background:rgb(150,150,139)"></div>
<div class="a" style="left:557px;top:559px;width:5px;height:5px;background:rgb(178,178,178)"></div>
<div class="a" style="left:562px;top:559px;width:5px;height:5px;background:rgb(198,194,192)"></div>
<div class="a" style="left:567px;top:559px;width:5px;height:5px;background:rgb(228,228,228)"></div>
<div class="a" style="left:534px;top:564px;width:3px;height:5px;background:rgb(235,235,238)"></div>
<div class="a" style="left:537px;top:564px;width:5px;height:5px;background:rgb(229,229,229)"></div>
<div class="a" style="left:542px;top:564px;width:5px;height:5px;background:rgb(235,233,232)"></div>
<div class="a" style="left:547px;top:564px;width:5px;height:5px;background:rgb(221,221,218)"></div>
<div class="a" style="left:552px;top:564px;width:5px;height:5px;background:rgb(230,228,231)"></div>
<div class="a" style="left:557px;top:564px;width:5px;height:5px;background:rgb(227,227,224)"></div>
<div class="a" style="left:562px;top:564px;width:5px;height:5px;background:rgb(233,232,231)"></div>
<div class="a" style="left:567px;top:564px;width:5px;height:5px;background:rgb(242,242,242)"></div>
<div class="a" style="left:534px;top:569px;width:3px;height:5px;background:rgb(245,246,246)"></div>
<div class="a" style="left:537px;top:569px;width:5px;height:5px;background:rgb(245,245,246)"></div>
<div class="a" style="left:542px;top:569px;width:5px;height:5px;background:rgb(246,245,246)"></div>
<div class="a" style="left:547px;top:569px;width:5px;height:5px;background:rgb(246,246,246)"></div>
<div class="a" style="left:552px;top:569px;width:5px;height:5px;background:rgb(246,246,246)"></div>
<div class="a" style="left:557px;top:569px;width:5px;height:5px;background:rgb(246,245,246)"></div>
<div class="a" style="left:562px;top:569px;width:5px;height:5px;background:rgb(245,245,246)"></div>
<div class="a" style="left:567px;top:569px;width:5px;height:5px;background:rgb(246,246,245)"></div>
<div class="a" style="left:572px;top:569px;width:5px;height:5px;background:rgb(245,246,246)"></div>
<div class="a" style="left:577px;top:569px;width:5px;height:5px;background:rgb(245,245,246)"></div>
<div class="a" style="left:582px;top:569px;width:5px;height:5px;background:rgb(246,246,245)"></div>
<div class="a" style="left:587px;top:569px;width:5px;height:5px;background:rgb(246,246,245)"></div>
<div class="a" style="left:592px;top:569px;width:5px;height:5px;background:rgb(246,245,246)"></div>
<div class="a" style="left:597px;top:569px;width:5px;height:5px;background:rgb(246,246,245)"></div>
<div class="a" style="left:602px;top:569px;width:5px;height:5px;background:rgb(246,246,245)"></div>
<div class="a" style="left:607px;top:569px;width:5px;height:5px;background:rgb(245,246,246)"></div>
<div class="a" style="left:612px;top:569px;width:5px;height:5px;background:rgb(246,246,245)"></div>
<div class="a" style="left:617px;top:569px;width:0px;height:5px;background:rgb(245,245,246)"></div>
<div class="a" style="left:1107px;top:319px;width:17px;height:257px;background:#F0F0F0"></div>
<div class="a" style="left:1108px;top:337px;width:15px;height:99px;background:#CDCDCD"></div>
<svg class="a" style="left:1111px;top:325px" width="9" height="8" viewBox="0 0 9 8"><path d="M1 7V4.6L4.5 1.1L8 4.6V7L4.5 3.5Z" fill="#5A5A5A"/></svg>
<svg class="a" style="left:1111px;top:563px" width="9" height="8" viewBox="0 0 9 8"><path d="M1 1V3.4L4.5 6.9L8 3.4V1L4.5 4.5Z" fill="#5A5A5A"/></svg>
<div class="a" style="left:11px;top:576px;width:1113px;height:16px;background:#F0F0F0"></div>
<div class="a" style="left:10px;top:592px;width:1115px;height:1px;background:#C4CFDB"></div>
<div class="a" style="left:28px;top:576px;width:420px;height:15px;background:#CDCDCD"></div>
<svg class="a" style="left:15px;top:579px" width="8" height="9" viewBox="0 0 8 9"><path d="M7 1H4.6L1.1 4.5L4.6 8H7L3.5 4.5Z" fill="#5A5A5A"/></svg>
<svg class="a" style="left:1095px;top:579px" width="8" height="9" viewBox="0 0 8 9"><path d="M1 1H3.4L6.9 4.5L3.4 8H1L4.5 4.5Z" fill="#5A5A5A"/></svg>
<div class="a" style="left:928px;top:598px;width:93px;height:34px;background:#E1E1E1;border:1px solid #ADADAD"></div>
<div id="ok" class="t" style="left:979.40px;top:610.00px;font-size:11px;font-weight:400;color:#000;letter-spacing:-1.000px;">OK</div>
<div class="a" style="left:1029px;top:598px;width:93px;height:34px;background:#E1E1E1;border:1px solid #ADADAD"></div>
<div id="cancel" class="t" style="left:1071.40px;top:610.00px;font-size:11px;font-weight:400;color:#000;letter-spacing:-0.360px;">Cancel</div>
<svg class="a" style="left:932px;top:605px" width="25" height="20" viewBox="0 0 25 20"><path d="M2.6 11.6L7.6 16.6L21.6 2.4" stroke="#56B462" stroke-width="4.6" fill="none" stroke-linecap="round" stroke-linejoin="round"/></svg>
<svg class="a" style="left:1034px;top:604px" width="23" height="23" viewBox="0 0 23 23"><circle cx="11.2" cy="11.75" r="9.8" fill="none" stroke="#C47B98" stroke-width="2.7"/><path d="M18.8 6.1L3.6 17.4" stroke="#C47B98" stroke-width="2.7"/></svg>
<svg class="a" style="left:26px;top:598px" width="120" height="32" viewBox="0 0 120 32">
<defs>
<linearGradient id="lg" x1="0" y1="0" x2="0" y2="1"><stop offset="0" stop-color="#3DB552"/><stop offset="1" stop-color="#109A3F"/></linearGradient>
<radialGradient id="gb" cx="0.4" cy="0.35" r="0.7"><stop offset="0" stop-color="#5FB0EA"/><stop offset="0.6" stop-color="#1A78C9"/><stop offset="1" stop-color="#0B55A8"/></radialGradient>
</defs>
<text x="4" y="23.9" font-family="Liberation Sans" font-weight="bold" font-size="24.5" fill="url(#lg)" textLength="71" lengthAdjust="spacingAndGlyphs">earths</text>
<text x="97.6" y="23.9" font-family="Liberation Sans" font-weight="bold" font-size="24.5" fill="url(#lg)" textLength="16.4" lengthAdjust="spacingAndGlyphs">ft</text>
<circle cx="86.5" cy="15.8" r="10.8" fill="url(#gb)"/>
<path d="M79 9C81 6 85 5.5 88 6.5C86 8 84 8.5 83.5 10.5C82 12 80.5 13 79.5 16C78 14 78 11 79 9Z" fill="#8CCB8F" opacity="0.9"/>
<path d="M88.5 9C91 8.5 94 10 95.5 12.5C96.5 15 96 18 94.5 20.5C93 23 90.5 24.5 89 25C89.5 22 88.5 20 87.5 18.5C86 17 86.5 14.5 88 13.5C89 12.5 88 10.5 88.5 9Z" fill="#8CCB8F" opacity="0.9"/>
<path d="M77 18C79 18.5 80 20.5 81.5 22.5C80 23 78.5 21.5 77.5 20Z" fill="#8CCB8F" opacity="0.8"/>
</svg>

</body></html>
